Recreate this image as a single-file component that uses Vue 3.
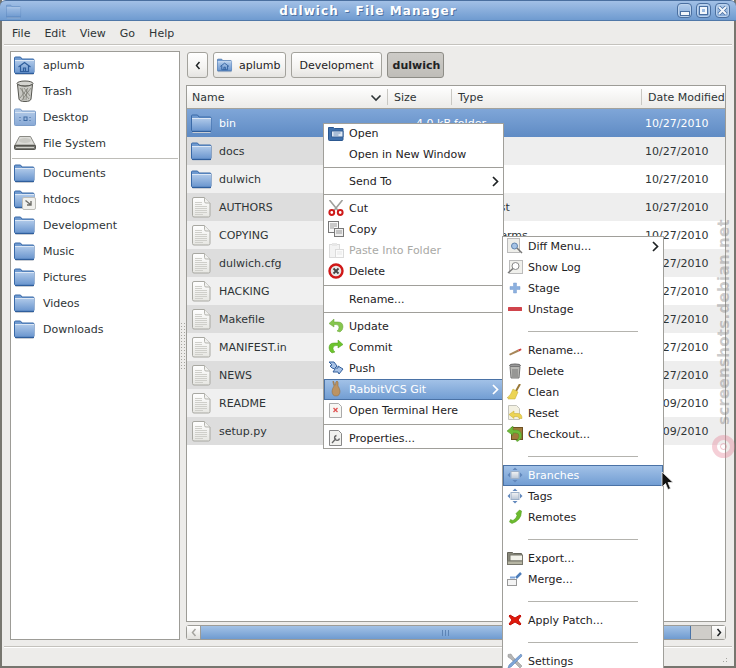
<template>
  <div class="window">
    <svg class="defs" width="0" height="0">
      <defs>
        <linearGradient id="gf" x1="0" y1="0" x2="0" y2="1">
          <stop offset="0" stop-color="#b2cbea" />
          <stop offset="1" stop-color="#6c97cf" />
        </linearGradient>
        <linearGradient id="gd" x1="0" y1="0" x2="0" y2="1">
          <stop offset="0" stop-color="#b6cde9" />
          <stop offset="1" stop-color="#88a9d6" />
        </linearGradient>
        <linearGradient id="gp" x1="0" y1="0" x2="0" y2="1">
          <stop offset="0" stop-color="#ffffff" />
          <stop offset="1" stop-color="#e6e6e2" />
        </linearGradient>
        <linearGradient id="gs" x1="0" y1="0" x2="0" y2="1">
          <stop offset="0" stop-color="#f4f4f4" />
          <stop offset="1" stop-color="#b9c6d6" />
        </linearGradient>
        <symbol id="folder" viewBox="0 0 22 22">
          <path d="M.500 4q0-1 1-1h5l1.500 2h11q1 0 1 1v12q0 1-1 1h-17.500q-1 0-1-1z" fill="#6f9ad0" stroke="#3a6aa8" />
          <rect x="1" y="6" width="19" height="12.500" fill="url(#gf)" />
          <path d="M1 6.500h19" stroke="#dce7f5" />
          <path d="M1 19.500h19" stroke="#2f5e9c" />
          <path d="M1.500 20.500h18" stroke="#c8cdd4" />
        </symbol>
        <symbol id="page" viewBox="0 0 22 22">
          <path d="M3 1.500h10.500l5.500 5.500v12.500q0 1.500-1.500 1.500H3q-1.500 0-1.500-1.500V3Q1.500 1.500 3 1.500z" fill="url(#gp)" stroke="#a8a8a2" />
          <path d="M13.500 1.500v4q0 1.500 1.500 1.500h4" fill="#f0f0ee" stroke="#b5b5af" />
          <path d="M4 6.500h7M4 8.500h7M4 10.500h12M4 12.500h12M4 14.500h12M4 16.500h12M4 18.500h8" stroke="#cfcfca" />
        </symbol>
        <symbol id="home" viewBox="0 0 22 22">
          <use href="#folder" width="22" height="22" />
          <path d="M4.500 13l6-4.500 6 4.500M6.500 12v5.500h8V12M9.500 17.500V14h2v3.500" fill="none" stroke="#2f5e9c" stroke-width="1.200" />
        </symbol>
        <symbol id="desk" viewBox="0 0 22 22">
          <path d="M.500 4q0-1 1-1h5l1.500 2h12.500q1 0 1 1v12.500q0 1-1 1h-19q-1 0-1-1z" fill="url(#gd)" stroke="#7d9dc8" />
          <path d="M1 6.500h20" stroke="#d8e4f3" />
          <rect x="10" y="11" width="3" height="3.500" fill="none" stroke="#3f6aa2" />
          <path d="M6 11v1M6 14v1M16 11v1M16 14v1" stroke="#3f6aa2" />
        </symbol>
        <symbol id="link" viewBox="0 0 22 22">
          <use href="#folder" width="22" height="22" />
          <rect x="8.500" y="9.500" width="13" height="12" rx="1.500" fill="#f1f1ee" stroke="#bdbdb8" />
          <path d="M11.500 12.500l5 4M17 13v4h-4" fill="none" stroke="#6d6d68" stroke-width="1.400" />
        </symbol>
        <symbol id="bin22" viewBox="0 0 22 22">
          <ellipse cx="11" cy="3.500" rx="8" ry="2.500" fill="#d4d4d0" stroke="#55554f" />
          <path d="M3.500 4.500L5 19q.5 2.500 6 2.500T17 19l1.500-14.500Q11 8 3.500 4.500z" fill="#c9c9c4" stroke="#55554f" />
          <path d="M6 8l9 11M10 8l6 8M14 8l-8 10M17 8l-9 12M8 8l2 12M13 9l-1 11" stroke="#77776f" stroke-width=".7" />
        </symbol>
        <symbol id="disk" viewBox="0 0 22 22">
          <path d="M5.500 4.500h11L21 13H1z" fill="#dcdcd8" stroke="#8a8a84" />
          <ellipse cx="11" cy="8.500" rx="6" ry="2.500" fill="#c9c9c4" />
          <path d="M.500 13.500h21v3q0 1-1 1h-19q-1 0-1-1z" fill="#777772" stroke="#55554f" />
          <path d="M2 15.500h18" stroke="#cfcfc9" />
        </symbol>
        <symbol id="open" viewBox="0 0 16 16">
          <path d="M.500 2.500h5l1 1h8.500v11q0 1-1 1h-12.500q-1 0-1-1z" fill="#3f70ac" stroke="#2c5890" />
          <path d="M3.500 6h11.500v6H3.500z" fill="#dfe8f3" stroke="#355f95" />
          <path d="M5.500 8h7M5.500 10h5" stroke="#7393bb" />
        </symbol>
        <symbol id="cut" viewBox="0 0 16 16">
          <path d="M1.500 0l8.500 10.500M14.500 0L6 10.500" stroke="#a0a09c" stroke-width="1.600" fill="none" />
          <circle cx="3.800" cy="12.500" r="2.400" fill="#fff" stroke="#cf1a1a" stroke-width="2" />
          <circle cx="12.200" cy="12.500" r="2.400" fill="#fff" stroke="#cf1a1a" stroke-width="2" />
        </symbol>
        <symbol id="copy" viewBox="0 0 16 16">
          <rect x=".500" y=".500" width="10" height="11" fill="#f8f8f8" stroke="#777" />
          <rect x="6.500" y="7.500" width="9" height="8" fill="#eee" stroke="#777" />
          <path d="M2 3h7M2 5h7M2 7h4M8 10h6M8 12h6" stroke="#999" />
        </symbol>
        <symbol id="paste" viewBox="0 0 16 16">
          <rect x="1.500" y="2.500" width="10" height="13" fill="#eee" stroke="#ccc" />
          <rect x="4" y="1" width="5" height="3" fill="#ddd" />
          <rect x="7.500" y="7.500" width="8" height="8" fill="#fafafa" stroke="#ccc" />
          <path d="M9 10h5M9 12h5" stroke="#ddd" />
        </symbol>
        <symbol id="delete" viewBox="0 0 16 16">
          <circle cx="8" cy="8" r="6.500" fill="#e8e8e8" stroke="#d01818" stroke-width="2.400" />
          <path d="M5.500 5.500l5 5M10.500 5.500l-5 5" stroke="#444" stroke-width="1.800" />
        </symbol>
        <symbol id="update" viewBox="0 0 16 16">
          <path d="M6 1L1 5.500 6 9V6.500h2q3 0 3 3 0 2-2 3.500l3 1q3-2 3-5Q15 4 10 4H6z" fill="#86c64f" stroke="#66a337" stroke-width=".5" />
        </symbol>
        <symbol id="commit" viewBox="0 0 16 16">
          <path d="M10 1l5 4.500L10 9V6.500H8q-3 0-3 3 0 2 2 3.500l-3 1q-3-2-3-5Q1 4 6 4h4z" fill="#6cc42d" stroke="#4f9a1c" stroke-width=".5" />
        </symbol>
        <symbol id="push" viewBox="0 0 16 16">
          <path d="M1 2h5l3 4-2 2h3V6l5 3-4 5-1-2H5l2-3-3-1-2-2 2-1z" fill="#a7c2e6" stroke="#34609c" />
        </symbol>
        <symbol id="rabbit" viewBox="0 0 16 16">
          <path d="M5 0q1 0 1.500 4h1Q7.500 0 9 0q1.500 0 1 5 1.500 2 2 5 0 5-4 5T4 10q.5-3 2-5-1.500-4-1-5z" fill="#bc9362" stroke="#8f6a3e" stroke-width=".5" />
        </symbol>
        <symbol id="term" viewBox="0 0 16 16">
          <path d="M1.500 1.500h9l3 3v11h-12z" fill="#f7f7f4" stroke="#aaa" />
          <path d="M5.500 6l4 4M9.500 6l-4 4" stroke="#e05050" stroke-width="1.300" />
        </symbol>
        <symbol id="props" viewBox="0 0 16 16">
          <path d="M1.500 .500h9l3 3v12h-12z" fill="#f2f2ef" stroke="#888" />
          <path d="M4 13l4-4.500M8.500 5.500a2.500 2.500 0 1 0 3 3" stroke="#666" stroke-width="1.300" fill="none" />
        </symbol>
        <symbol id="diff" viewBox="0 0 16 16">
          <rect x=".500" y=".500" width="12" height="14" fill="#eeeeea" stroke="#bbb" />
          <circle cx="7.500" cy="8" r="3" fill="#a5c3e6" stroke="#5f83ad" />
          <path d="M10 10l5 5" stroke="#777" stroke-width="1.500" />
        </symbol>
        <symbol id="log" viewBox="0 0 16 16">
          <rect x="2.500" y="1.500" width="13" height="13" fill="#f0f0ec" stroke="#bbb" />
          <circle cx="8.500" cy="7" r="3.500" fill="#fff" stroke="#888" />
          <path d="M6 9.500L1 14" stroke="#777" stroke-width="1.500" />
        </symbol>
        <symbol id="plus" viewBox="0 0 16 16">
          <path d="M6.500 3h3v3.500H13v3H9.500V13h-3V9.500H3v-3h3.500z" fill="#8cb0de" stroke="#7a9ed0" stroke-width=".5" />
        </symbol>
        <symbol id="minus" viewBox="0 0 16 16">
          <rect x="1" y="6" width="14" height="4" rx=".5" fill="#d0444c" />
        </symbol>
        <symbol id="pencil" viewBox="0 0 16 16">
          <path d="M2 12l1 1.500 9-4-1-2z" fill="#a78658" />
          <path d="M11 7.500l1 2 2.500-1.500-.5-1.500z" fill="#d04040" />
        </symbol>
        <symbol id="trash" viewBox="0 0 16 16">
          <ellipse cx="8" cy="2.500" rx="5.500" ry="1.500" fill="#999" stroke="#666" />
          <path d="M3 3.500l1 11.500h8l1-11.500z" fill="#b8b8b4" stroke="#777" />
          <path d="M6 6v8M8 6v8M10 6v8" stroke="#777" />
        </symbol>
        <symbol id="broom" viewBox="0 0 16 16">
          <path d="M13 0l-4 7" stroke="#9a7a3a" stroke-width="2" />
          <path d="M6 5l5 3-3 7H1q1-1 1-2l-2 1q4-3 6-9z" fill="#ecd454" stroke="#c2a82a" stroke-width=".5" />
        </symbol>
        <symbol id="reset" viewBox="0 0 16 16">
          <path d="M1.500 .500h8l3 3v11h-11z" fill="#f3f1e2" stroke="#c4c4bc" />
          <path d="M2 9.500l5-3.500v2.500h4q4 0 4 5h-3q0-2-2-2H7v2z" fill="#ecd454" stroke="#c4a92e" stroke-width=".5" />
        </symbol>
        <symbol id="checkout" viewBox="0 0 16 16">
          <rect x="4.500" y="1.500" width="11" height="12" fill="#a07a3c" stroke="#6d5223" />
          <path d="M6 0L0 5l6 4.500V7h3q3 0 3 3 0 3-3 4.500l1 1q5-2 4.500-6.500Q14 4 9 4H6z" fill="#6fbb3a" stroke="#4f8f22" stroke-width=".5" />
        </symbol>
        <symbol id="branch" viewBox="0 0 16 16">
          <rect x="4" y="4.500" width="8" height="7" fill="url(#gs)" stroke="#9db0c8" />
          <path d="M8 .500l2.500 2.500h-5zM8 15.500l2.500-2.500h-5zM.500 8L3 5.500v5zM15.500 8L13 5.500v5z" fill="#6288bc" />
        </symbol>
        <symbol id="phone" viewBox="0 0 16 16">
          <path d="M12.500 1l2 1q0 5-2.500 8t-7 4.500L2.500 13l1-2.500 2.500 1q3.500-2 4-5L9 4.500z" fill="#6cbb2e" stroke="#4f9a1c" stroke-width=".5" />
        </symbol>
        <symbol id="export" viewBox="0 0 16 16">
          <path d="M.500 2.500h5l1 1h8v8h-14z" fill="#89887a" stroke="#65645a" />
          <rect x="3" y="5" width="12.500" height="6" fill="#f2f2ea" stroke="#77766b" />
          <rect x=".500" y="11" width="15" height="3.500" fill="#b6b5a3" stroke="#77766b" />
        </symbol>
        <symbol id="merge" viewBox="0 0 16 16">
          <rect x=".500" y="8.500" width="9" height="6" fill="#f4f4f4" stroke="#999" />
          <path d="M14 2l-5 5" stroke="#4f7fbb" stroke-width="2.500" fill="none" />
          <path d="M3 6.500h5" stroke="#7ea5d8" stroke-width="2" />
        </symbol>
        <symbol id="patch" viewBox="0 0 16 16">
          <path d="M3 3l5 3 5-3 1 1-3 4 3 4-1 1-5-3-5 3-1-1 3-4-3-4z" fill="#e11a0c" stroke="#c20d05" />
        </symbol>
        <symbol id="tools" viewBox="0 0 16 16">
          <path d="M1 1.500L4 1l2 3 9 9-2 2-9-9-3-2z" fill="#b5b5b5" stroke="#888" stroke-width=".5" />
          <path d="M14 1l1 2L4 14l-3 1 1-3z" fill="#7ea5d8" stroke="#4c75a8" stroke-width=".5" />
        </symbol>
      </defs>
    </svg>

    <header class="titlebar">
      <svg class="title-icon" width="16" height="16"><use href="#folder" width="16" height="16" /></svg>
      <span class="title">dulwich - File Manager</span>
      <div class="win-btns">
        <span class="win-btn"><i class="glyph-min"></i></span>
        <span class="win-btn"><i class="glyph-max"></i></span>
        <span class="win-btn">
          <svg width="11" height="11" viewBox="0 0 11 11"><path d="M2 2l7 7M9 2l-7 7" stroke="#4a6fa0" stroke-width="3.600" /><path d="M2 2l7 7M9 2l-7 7" stroke="#f2f6fb" stroke-width="2" /></svg>
        </span>
      </div>
    </header>

    <nav class="menubar">
      <span v-for="m in menus" :key="m">{{ m }}</span>
    </nav>

    <main class="content">
      <aside class="sidebar">
        <template v-for="group in places" :key="group[0].name">
          <div v-for="p in group" :key="p.name" class="place">
            <svg class="place-icon" width="22" height="22"><use :href="'#' + p.icon" width="22" height="22" /></svg>
            <span>{{ p.name }}</span>
          </div>
          <div v-if="group === places[0]" class="place-sep"></div>
        </template>
      </aside>

      <div class="grip"></div>

      <section class="main">
        <div class="pathbar">
          <button class="crumb back">
            <svg width="6" height="9" viewBox="0 0 6 9"><path d="M4.500 1L1.500 4.500l3 3.500" fill="none" stroke="#1e2224" stroke-width="1.500" /></svg>
          </button>
          <button class="crumb home">
            <svg width="16" height="16"><use href="#home" width="16" height="16" /></svg>
            aplumb
          </button>
          <button class="crumb dev">Development</button>
          <button class="crumb current">dulwich</button>
        </div>

        <div class="list">
          <div class="list-head">
            <div class="col col-name">Name<svg class="sort" width="12" height="8" viewBox="0 0 12 8"><path d="M1.500 1.500L6 6l4.500-4.500" fill="none" stroke="#2e3436" stroke-width="1.600" /></svg></div>
            <div class="col col-size">Size</div>
            <div class="col col-type">Type</div>
            <div class="col col-date">Date Modified</div>
          </div>
          <div class="rows">
            <div v-for="(f, i) in files" :key="f.name" class="row" :class="{ odd: i % 2 === 1, selected: i === 0 }">
              <svg class="row-icon" width="22" height="22"><use :href="'#' + f.icon" width="22" height="22" /></svg>
              <span class="cell-name">{{ f.name }}</span>
              <span class="cell-size">{{ f.size }}</span>
              <span class="cell-type">{{ f.type }}</span>
              <span class="cell-date">{{ f.date }}</span>
            </div>
          </div>
        </div>

        <div class="hscroll">
          <span class="arrow left">
            <svg width="6" height="9" viewBox="0 0 6 9"><path d="M4.500 1L1.500 4.500l3 3.500" fill="none" stroke="#a5a49f" stroke-width="1.500" /></svg>
          </span>
          <div class="track">
            <div class="thumb"><i></i><i></i><i></i></div>
          </div>
          <span class="arrow right">
            <svg width="6" height="9" viewBox="0 0 6 9"><path d="M1.500 1l3 3.500-3 3.500" fill="none" stroke="#1e2224" stroke-width="1.500" /></svg>
          </span>
        </div>
      </section>
    </main>

    <footer class="statusbar"><div class="resize"></div></footer>

    <ul class="menu menu-main">
      <template v-for="(it, i) in mainMenu" :key="i">
        <li v-if="it.sep" class="sep" :class="{ tall: it.sep === 'tall' }"></li>
        <li v-else class="item" :class="{ active: it.active, disabled: it.disabled }">
          <svg v-if="it.icon" class="menu-icon" width="16" height="16"><use :href="'#' + it.icon" width="16" height="16" /></svg>
          <span>{{ it.label }}</span>
          <svg v-if="it.sub" class="chev" width="7" height="11" viewBox="0 0 7 11"><path d="M1 1l4.500 4.500L1 10" fill="none" stroke="currentColor" stroke-width="1.700" /></svg>
        </li>
      </template>
    </ul>

    <ul class="menu menu-git">
      <template v-for="(it, i) in gitMenu" :key="i">
        <li v-if="it.sep" class="gap"><i></i></li>
        <li v-else class="item" :class="{ active: it.active }">
          <svg class="menu-icon" width="16" height="16"><use :href="'#' + it.icon" width="16" height="16" /></svg>
          <span>{{ it.label }}</span>
          <svg v-if="it.sub" class="chev" width="7" height="11" viewBox="0 0 7 11"><path d="M1 1l4.500 4.500L1 10" fill="none" stroke="currentColor" stroke-width="1.700" /></svg>
        </li>
      </template>
    </ul>

    <svg class="cursor" width="13" height="20" viewBox="0 0 13 20">
      <path d="M1 1v15l3.500-3.500 2.500 6 2.500-1-2.500-6H12z" fill="#111" stroke="#eee" stroke-width=".8" />
    </svg>

    <div class="watermark">screenshots.debian.net</div>
    <div class="wm-ring"><i></i></div>
  </div>
</template>

<script setup>
const menus = ['File', 'Edit', 'View', 'Go', 'Help']

const places = [
  [
    { name: 'aplumb', icon: 'home' },
    { name: 'Trash', icon: 'bin22' },
    { name: 'Desktop', icon: 'desk' },
    { name: 'File System', icon: 'disk' },
  ],
  [
    { name: 'Documents', icon: 'folder' },
    { name: 'htdocs', icon: 'link' },
    { name: 'Development', icon: 'folder' },
    { name: 'Music', icon: 'folder' },
    { name: 'Pictures', icon: 'folder' },
    { name: 'Videos', icon: 'folder' },
    { name: 'Downloads', icon: 'folder' },
  ],
]

const d1 = '10/27/2010'
const d2 = '10/09/2010'
// size and type of the rows under the context menu are not visible, so they stay empty
const files = [
  { name: 'bin', icon: 'folder', size: '4.0 kB', type: 'folder', date: d1 },
  { name: 'docs', icon: 'folder', size: '', type: '', date: d1 },
  { name: 'dulwich', icon: 'folder', size: '', type: '', date: d1 },
  { name: 'AUTHORS', icon: 'page', size: '', type: 'author list', date: d1 },
  { name: 'COPYING', icon: 'page', size: '', type: 'license terms', date: d1 },
  { name: 'dulwich.cfg', icon: 'page', size: '', type: '', date: d1 },
  { name: 'HACKING', icon: 'page', size: '', type: '', date: d1 },
  { name: 'Makefile', icon: 'page', size: '', type: '', date: d1 },
  { name: 'MANIFEST.in', icon: 'page', size: '', type: '', date: d1 },
  { name: 'NEWS', icon: 'page', size: '', type: '', date: d1 },
  { name: 'README', icon: 'page', size: '', type: '', date: d2 },
  { name: 'setup.py', icon: 'page', size: '', type: '', date: d2 },
]

const mainMenu = [
  { label: 'Open', icon: 'open' },
  { label: 'Open in New Window' },
  { sep: true },
  { label: 'Send To', sub: true },
  { sep: true },
  { label: 'Cut', icon: 'cut' },
  { label: 'Copy', icon: 'copy' },
  { label: 'Paste Into Folder', icon: 'paste', disabled: true },
  { label: 'Delete', icon: 'delete' },
  { sep: 'tall' },
  { label: 'Rename...' },
  { sep: true },
  { label: 'Update', icon: 'update' },
  { label: 'Commit', icon: 'commit' },
  { label: 'Push', icon: 'push' },
  { label: 'RabbitVCS Git', icon: 'rabbit', sub: true, active: true },
  { label: 'Open Terminal Here', icon: 'term' },
  { sep: 'tall' },
  { label: 'Properties...', icon: 'props' },
]

const gitMenu = [
  { label: 'Diff Menu...', icon: 'diff', sub: true },
  { label: 'Show Log', icon: 'log' },
  { label: 'Stage', icon: 'plus' },
  { label: 'Unstage', icon: 'minus' },
  { sep: true },
  { label: 'Rename...', icon: 'pencil' },
  { label: 'Delete', icon: 'trash' },
  { label: 'Clean', icon: 'broom' },
  { label: 'Reset', icon: 'reset' },
  { label: 'Checkout...', icon: 'checkout' },
  { sep: true },
  { label: 'Branches', icon: 'branch', active: true },
  { label: 'Tags', icon: 'branch' },
  { label: 'Remotes', icon: 'phone' },
  { sep: true },
  { label: 'Export...', icon: 'export' },
  { label: 'Merge...', icon: 'merge' },
  { sep: true },
  { label: 'Apply Patch...', icon: 'patch' },
  { sep: true },
  { label: 'Settings', icon: 'tools' },
]
</script>

<style scoped>
.window {
  position: relative;
  width: 736px;
  height: 668px;
  display: flex;
  flex-direction: column;
  box-sizing: border-box;
  background: #edecea;
  border-left: 2px solid #77766f;
  border-right: 2px solid #77766f;
  border-bottom: 2px solid #77766f;
  font-family: "DejaVu Sans", sans-serif;
  font-size: 11px;
  color: #2e3436;
}
.defs {
  position: absolute;
}

.titlebar {
  flex: none;
  height: 21px;
  margin: 0 -2px;
  padding: 0 6px 0 6px;
  display: flex;
  align-items: center;
  position: relative;
  background: linear-gradient(#a2c0e6, #6f9bd0);
  border-top: 1px solid #4a6f9f;
  border-bottom: 1px solid #5078a8;
  border-radius: 6px 6px 0 0;
  box-sizing: border-box;
}
.title-icon {
  opacity: 0.5;
}
.title {
  position: absolute;
  left: 0;
  right: 0;
  top: 3px;
  text-align: center;
  font-size: 12px;
  font-weight: bold;
  color: #fff;
  letter-spacing: 1.1px;
  text-shadow: 1px 1px 0 #4f74a4;
}
.win-btns {
  margin-left: auto;
  display: flex;
  gap: 4px;
  position: relative;
}
.win-btn {
  width: 15px;
  height: 15px;
  box-sizing: border-box;
  border: 1px solid #4a6fa0;
  border-radius: 4px;
  display: flex;
  align-items: center;
  justify-content: center;
  background: linear-gradient(#b3cdec, #84a9d8);
  box-shadow: inset 0 0 0 1px #bcd2ec;
}
.glyph-min {
  width: 8px;
  height: 3px;
  margin-top: 5px;
  background: #f2f6fb;
  border: 1px solid #4a6fa0;
  box-sizing: content-box;
}
.glyph-max {
  width: 7px;
  height: 7px;
  border: 2px solid #f2f6fb;
  outline: 1px solid #4a6fa0;
  box-sizing: border-box;
}

.menubar {
  flex: none;
  height: 24px;
  margin: 0 2px;
  padding: 1px 6px 0 8px;
  display: flex;
  align-items: center;
  gap: 14px;
  border-bottom: 1px solid #c4c2bd;
  box-shadow: 0 1px 0 #fff;
  box-sizing: border-box;
}

.content {
  flex: none;
  display: flex;
  padding: 6px 8px 6px;
}
.sidebar {
  flex: none;
  width: 170px;
  height: 589px;
  box-sizing: border-box;
  background: #fff;
  border: 1px solid #9d9c97;
}
.place {
  height: 26px;
  display: flex;
  align-items: center;
  gap: 7px;
  padding-left: 3px;
}
.place-icon {
  flex: none;
}
.place-sep {
  height: 1px;
  margin: 2px 1px 1px;
  background: #bebdb8;
}

.grip {
  flex: none;
  width: 6px;
  height: 47px;
  margin-top: 271px;
  background: radial-gradient(circle, #a5a49f 0.6px, transparent 0.9px) 0 0 / 3px 3px;
}

.main {
  flex: 1;
  min-width: 0;
  display: flex;
  flex-direction: column;
}
.pathbar {
  display: flex;
  gap: 5px;
  height: 26px;
  margin: 1px 0 7px 1px;
}
.crumb {
  font: inherit;
  color: #1e2224;
  height: 26px;
  box-sizing: border-box;
  display: flex;
  align-items: center;
  border: 1px solid #a3a29c;
  border-radius: 3px;
  background: linear-gradient(#fff, #f4f3f1 60%, #e5e4e1);
}
.crumb.back {
  width: 21px;
  padding: 0;
  justify-content: center;
}
.crumb.home {
  padding: 0 5px 0 3px;
  gap: 6px;
}
.crumb.dev {
  padding: 0 7px;
}
.crumb.current {
  font-weight: bold;
  padding: 0 3px 0 5px;
  background: linear-gradient(#cdcbc7, #bfbdb8);
  border-color: #8d8c86;
}

.list {
  width: 540px;
  height: 537px;
  box-sizing: border-box;
  background: #fff;
  border: 1px solid #9d9c97;
}
.list-head {
  height: 22px;
  display: flex;
  background: linear-gradient(#fff, #ecebe8);
  border-bottom: 1px solid #a3a29c;
  box-sizing: content-box;
}
.col {
  display: flex;
  align-items: center;
  padding-left: 5px;
  box-sizing: border-box;
  position: relative;
}
.col + .col::before {
  content: "";
  position: absolute;
  left: -1px;
  top: 3px;
  bottom: 3px;
  width: 1px;
  background: #c9c8c3;
}
.col-name {
  width: 201px;
}
.sort {
  position: absolute;
  right: 6px;
  top: 8px;
}
.col-size {
  width: 64px;
  padding-left: 6px;
}
.col-type {
  width: 190px;
  padding-left: 6px;
}
.col-date {
  flex: 1;
  padding-left: 6px;
  white-space: nowrap;
}
.row {
  height: 28px;
  display: flex;
  align-items: center;
  padding-left: 4px;
  white-space: nowrap;
  background: linear-gradient(90deg, #f0f0f0 200px, #fff 200px);
}
.row.odd {
  background: linear-gradient(90deg, #dddddd 200px, #eeeeee 200px);
}
.row.selected {
  background: linear-gradient(#7fa6d8, #5f8bc4);
  color: #fff;
}
.row-icon {
  flex: none;
}
.cell-name {
  width: 176px;
  margin-left: 6px;
  flex: none;
}
.cell-size {
  width: 56px;
  text-align: right;
  flex: none;
}
.cell-type {
  width: 191px;
  margin-left: 3px;
  flex: none;
}

.hscroll {
  margin-top: 3px;
  width: 540px;
  height: 15px;
  display: flex;
  background: #cfcdc9;
  box-sizing: border-box;
  border: 1px solid #9d9c97;
  border-radius: 3px;
}
.arrow {
  flex: none;
  width: 14px;
  display: flex;
  align-items: center;
  justify-content: center;
  box-sizing: border-box;
  background: linear-gradient(#fff, #e2e1dd);
}
.arrow.left {
  border-right: 1px solid #9d9c97;
}
.arrow.right {
  border-left: 1px solid #9d9c97;
}
.track {
  flex: 1;
  display: flex;
}
.thumb {
  width: 489px;
  background: linear-gradient(#a3c2e6, #6f9bd0);
  border-right: 1px solid #4a74a8;
  display: flex;
  align-items: center;
  justify-content: center;
  gap: 2px;
}
.thumb i {
  width: 1px;
  height: 6px;
  background: #5d84b5;
}

.statusbar {
  flex: 1;
  margin: 0 2px;
  border-top: 1px solid #c4c2bd;
  box-shadow: inset 0 1px 0 #fff;
  display: flex;
  justify-content: flex-end;
  align-items: flex-end;
}
.resize {
  width: 10px;
  height: 10px;
  margin: 0 3px 2px 0;
  background: radial-gradient(circle, #a5a49f 0.7px, transparent 1px) 0 0 / 3px 3px;
  clip-path: polygon(100% 0, 100% 100%, 0 100%);
}

.menu {
  position: absolute;
  margin: 0;
  padding: 0;
  list-style: none;
  background: #fff;
  border: 1px solid #a09f9a;
  box-sizing: border-box;
  color: #1e2224;
  overflow: hidden;
}
.menu-main {
  left: 321px;
  top: 123px;
  width: 181px;
  height: 326px;
}
.menu-git {
  left: 500px;
  top: 236px;
  width: 162px;
  height: 432px;
  border-bottom: 0;
}
.item {
  height: 21px;
  box-sizing: border-box;
  display: flex;
  align-items: center;
  padding: 0 0 2px 25px;
  position: relative;
}
.menu-icon {
  position: absolute;
  left: 4px;
  top: 1px;
}
.chev {
  position: absolute;
  right: 4px;
  top: 4px;
  color: #1e2224;
}
.item.active {
  top: -1px;
  padding-bottom: 0;
  background: linear-gradient(#a4c3e8, #709cd2);
  color: #fff;
  box-shadow: inset 0 0 0 1px #4a72a6;
}
.item.active .chev {
  color: #fff;
  top: 5px;
}
.item.active .menu-icon {
  top: 2px;
}
.item.disabled {
  color: #a9a9a5;
}
.item.disabled .menu-icon {
  opacity: 0.7;
}
.sep {
  height: 6px;
  position: relative;
}
.sep.tall {
  height: 7px;
}
.sep::before {
  content: "";
  position: absolute;
  left: 0;
  right: 0;
  top: 1px;
  height: 1px;
  background: #a09f9a;
}
.sep.tall::before {
  top: 2px;
}
.gap {
  height: 20px;
  display: flex;
  align-items: center;
}
.gap i {
  display: block;
  width: 110px;
  height: 1px;
  margin-left: 25px;
  background: #b4b3ae;
}

.cursor {
  position: absolute;
  left: 659px;
  top: 471px;
}
.watermark {
  position: absolute;
  left: 713px;
  top: 425px;
  transform-origin: 0 0;
  transform: rotate(-90deg);
  font-size: 15px;
  font-weight: bold;
  white-space: nowrap;
  color: rgba(120, 120, 120, 0.4);
  letter-spacing: 0.3px;
}
.wm-ring {
  position: absolute;
  left: 710px;
  top: 435px;
  width: 23px;
  height: 23px;
  box-sizing: border-box;
  border-radius: 50%;
  border: 5px solid rgba(228, 130, 150, 0.38);
  display: flex;
  align-items: center;
  justify-content: center;
}
.wm-ring i {
  width: 7px;
  height: 7px;
  box-sizing: border-box;
  border-radius: 50%;
  border: 1px solid rgba(228, 130, 150, 0.5);
}
</style>

<style>
html,
body {
  margin: 0;
  overflow: hidden;
  background: #edecea;
}
</style>
